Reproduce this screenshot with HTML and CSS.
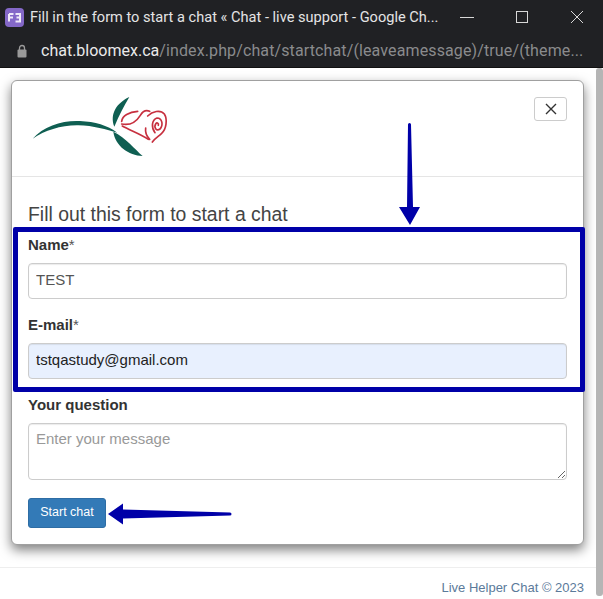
FILE: index.html
```html
<!DOCTYPE html>
<html lang="en">
<head>
    <meta charset="UTF-8">
    <meta name="viewport" content="width=device-width, initial-scale=1.0">
    <title>Fill in the form to start a chat</title>
    <link rel="stylesheet" href="styles.css">
</head>
<body>
    <div class="title-bar">
        <svg class="app-icon" width="19" height="19" viewBox="0 0 19 19">
            <rect width="19" height="19" rx="4" fill="#8468c8"/>
            <path d="M4 6h4.500M4 6v7.500M4 9.500h4M10.500 6h4.500v7.500h-4.500M11.500 9.500H15" fill="none" stroke="#efeaf9" stroke-width="2"/>
        </svg>
        <span class="window-title">Fill in the form to start a chat « Chat - live support - Google Ch...</span>
        <div class="window-controls">
            <svg width="14" height="14" viewBox="0 0 14 14"><path d="M0 7.500h14" stroke="#d8d8d8" stroke-width="1"/></svg>
            <svg width="14" height="14" viewBox="0 0 14 14"><rect x="1.500" y="1.500" width="11" height="11" fill="none" stroke="#d8d8d8" stroke-width="1"/></svg>
            <svg width="14" height="14" viewBox="0 0 14 14"><path d="M1 1l12 12M13 1L1 13" stroke="#d8d8d8" stroke-width="1"/></svg>
        </div>
    </div>
    <div class="address-bar">
        <svg width="10" height="14" viewBox="0 0 10 14">
            <path d="M2.500 6V4a2.500 2.500 0 0 1 5 0v2" fill="none" stroke="#9a9a9a" stroke-width="1.300"/>
            <rect x="0.500" y="5.500" width="9" height="8" rx="1" fill="#9a9a9a"/>
        </svg>
        <span class="url"><span class="url-host">chat.bloomex.ca</span><span class="url-path">/index.php/chat/startchat/(leaveamessage)/true/(theme...</span></span>
    </div>

    <div class="page">
        <main class="page-main">
            <div class="modal">
                <div class="modal-header">
                    <svg class="logo" width="140" height="62" viewBox="93 51 420 186">
                        <!-- stem and leaves -->
                        <path d="M98 176C130 138 190 120 240 123C285 125 322 136 352 158C320 149 280 137 235 136C185 135 135 151 98 176Z" fill="#0f5f52"/>
                        <path d="M343 140C328 100 352 68 388 51C372 78 358 105 343 140Z" fill="#0f5f52"/>
                        <path d="M340 155C346 198 385 226 428 228C405 208 378 174 340 155Z" fill="#0f5f52"/>
                        <!-- rose head -->
                        <g transform="translate(315 36)" fill="none" stroke="#c7303f" stroke-width="5" stroke-linecap="round">
                            <path d="M50 88C52 72 72 60 98 58"/>
                            <path d="M50 96C80 102 96 86 106 70C112 60 120 52 134 58"/>
                            <path d="M52 102C75 115 105 125 130 142"/>
                            <path d="M128 72C142 58 166 52 178 66C188 82 184 112 170 124C160 134 150 138 142 150"/>
                            <path d="M150 122C138 106 140 84 156 78C172 78 176 100 164 112C154 118 146 106 152 96C156 90 162 94 160 100"/>
                            <path d="M122 108C120 122 126 134 134 142"/>
                        </g>
                    </svg>
                    <button class="close-button" type="button" aria-label="Close">
                        <svg width="12" height="12" viewBox="0 0 12 12"><path d="M1 1l10 10M11 1L1 11" stroke="#333" stroke-width="1.400"/></svg>
                    </button>
                </div>
                <form class="modal-body">
                    <h4 class="form-title">Fill out this form to start a chat</h4>
                    <div class="form-group">
                        <label for="name-input"><b>Name</b>*</label>
                        <input id="name-input" class="form-control" type="text" value="TEST">
                    </div>
                    <div class="form-group">
                        <label for="email-input"><b>E-mail</b>*</label>
                        <input id="email-input" class="form-control autofilled" type="text" value="tstqastudy@gmail.com">
                    </div>
                    <div class="form-group">
                        <label for="question-input"><b>Your question</b></label>
                        <textarea id="question-input" class="form-control" placeholder="Enter your message"></textarea>
                    </div>
                    <button class="start-button" type="button">Start chat</button>
                </form>
            </div>
            <footer class="page-footer">Live Helper Chat © 2023</footer>
        </main>
        <div class="scrollbar"></div>

        <!-- annotations drawn over the screenshot -->
        <div class="highlight-box"></div>
        <svg class="arrow arrow-down" width="24" height="104" viewBox="0 0 24 104">
            <path d="M10 1.500a1.500 1.500 0 0 1 3 0L15 84H22L12 102 1 84H9Z" fill="#0000a8"/>
        </svg>
        <svg class="arrow arrow-left" width="126" height="24" viewBox="0 0 126 24">
            <path d="M1 12L16 1.500V7.500L123 10.500a1.300 1.300 0 0 1 0 3L16 16.500V22.500Z" fill="#0000a8"/>
        </svg>
    </div>
</body>
</html>
```
FILE: styles.css
```css
* {
    box-sizing: border-box;
}
html, body {
    margin: 0;
    height: 599px;
    overflow: hidden;
}
body {
    font-family: "Liberation Sans", Arial, sans-serif;
    font-size: 14px;
    color: #333;
    background-color: #fff;
}
.title-bar {
    display: flex;
    align-items: center;
    height: 34px;
    padding: 0 19px 0 5px;
    background-color: #202124;
    color: #e4e4e4;
}
.app-icon {
    flex: none;
    margin-right: 6px;
}
.window-title {
    flex: 1;
    font-family: Roboto, sans-serif;
    font-size: 14.600px;
    white-space: nowrap;
}
.window-controls {
    display: flex;
    gap: 41px;
}
.address-bar {
    display: flex;
    align-items: center;
    gap: 14px;
    height: 34px;
    padding: 0 13px 0 17px;
    background-color: #202124;
    border-bottom: 1px solid #111;
}
.url {
    font-family: Roboto, sans-serif;
    font-size: 16px;
    white-space: nowrap;
}
.url-host {
    color: #eaeaea;
}
.url-path {
    color: #8a8b8d;
    letter-spacing: 0.120px;
}
.page {
    position: relative;
    display: flex;
    height: 531px;
}
.page-main {
    flex: 1;
    min-width: 0;
    padding-top: 12px;
}
.modal {
    width: 573px;
    height: 465px;
    margin-left: 11px;
    background-color: #fff;
    border: 1px solid #a0a0a0;
    border-radius: 6px;
    box-shadow: 0 5px 12px rgba(0, 0, 0, 0.5);
}
.modal-header {
    display: flex;
    align-items: flex-start;
    justify-content: space-between;
    height: 96px;
    padding: 16px 16px 0 19px;
    border-bottom: 1px solid #e5e5e5;
}
.close-button {
    display: flex;
    align-items: center;
    justify-content: center;
    width: 33px;
    height: 24px;
    padding: 0;
    background-color: #fff;
    border: 1px solid #ccc;
    border-radius: 3px;
}
.modal-body {
    padding: 27px 16px 0;
}
.form-title {
    margin: 0;
    font-size: 19.400px;
    font-weight: 400;
    line-height: 20px;
    color: #444;
}
.form-group {
    margin-top: 11px;
}
.form-group + .form-group {
    margin-top: 16px;
}
.form-group label {
    display: block;
    height: 20px;
    margin-bottom: 8px;
    font-size: 15px;
    line-height: 20px;
    color: #555;
}
.form-group label b {
    color: #333;
}
.form-control {
    display: block;
    width: 100%;
    height: 36px;
    padding: 0 7px 3px;
    font-family: inherit;
    font-size: 15px;
    color: #555;
    background-color: #fff;
    border: 1px solid #ccc;
    border-radius: 4px;
    box-shadow: inset 0 1px 1px rgba(0, 0, 0, 0.08);
}
.autofilled {
    color: #222;
    background-color: #e8f0fe;
}
textarea.form-control {
    height: 57px;
    padding-top: 6px;
}
textarea.form-control::placeholder {
    color: #999;
}
.start-button {
    display: block;
    width: 78px;
    height: 30px;
    margin-top: 18px;
    padding: 0 0 2px;
    font-family: inherit;
    font-size: 12.500px;
    color: #fff;
    background-color: #337ab7;
    border: 1px solid #2e6da4;
    border-radius: 3px;
}
.page-footer {
    margin-top: 22px;
    height: 32px;
    padding: 12px 12px 0 0;
    font-size: 13px;
    text-align: right;
    color: #5b7a9a;
    border-top: 1px solid #eee;
}
.scrollbar {
    flex: none;
    width: 7px;
    margin: 0 0 3px;
    background-color: #b5b5b5;
    border-radius: 3px;
}
.highlight-box {
    position: absolute;
    left: 13px;
    top: 159px;
    width: 572px;
    height: 165px;
    border: 5px solid #0000a8;
    border-radius: 2px;
}
.arrow {
    position: absolute;
}
.arrow-down {
    left: 398px;
    top: 55px;
}
.arrow-left {
    left: 107px;
    top: 434px;
}
```
